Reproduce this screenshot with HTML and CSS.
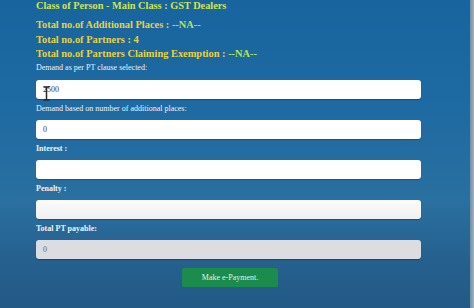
FILE: index.html
```html
<!DOCTYPE html>
<html lang="en">

<head>
    <meta charset="UTF-8">
    <meta name="viewport" content="width=device-width, initial-scale=1.0">
    <title>PT e-Payment</title>
    <link rel="stylesheet" href="styles.css">
</head>

<body>
    <div class="page">
        <div class="container">
            <h3 class="class-line">Class of Person - Main Class : GST Dealers</h3>
            <div class="totals">
                <p>Total no.of Additional Places : <span class="na">--NA--</span></p>
                <p>Total no.of Partners : 4</p>
                <p>Total no.of Partners Claiming Exemption : <span class="na">--NA--</span></p>
            </div>

            <form class="pay-form">
                <label class="field-label first">Demand as per PT clause selected:</label>
                <div class="input-wrap">
                    <input type="text" value="2500">
                    <span class="cursor">
                        <svg width="7" height="15" viewBox="0 0 7 15">
                            <path d="M0.5 1h6M3.5 1v13M0.5 14h6" stroke="#2a2a2a" stroke-width="1.5" fill="none"/>
                        </svg>
                    </span>
                </div>

                <label class="field-label">Demand based on number of additional places:</label>
                <input type="text" value="0">

                <label class="field-label bold">Interest :</label>
                <input type="text" value="">

                <label class="field-label bold">Penalty :</label>
                <input type="text" class="soft" value="">

                <label class="field-label bold">Total PT payable:</label>
                <input type="text" value="0" disabled>

                <div class="actions">
                    <button type="button">Make e-Payment.</button>
                </div>
            </form>
        </div>
        <div class="edge"></div>
    </div>
</body>

</html>
```

FILE: styles.css
```css
:root {
    --title-color: #cfe64a;
    --total-color: #e9d23a;
    --na-color: #b3e35a;
    --label-color: #eef3f8;
    --input-text: #3a3a3a;
    --button-color: #1b8c4c;
}

* {
    box-sizing: border-box;
    margin: 0;
    padding: 0;
}

body {
    font-family: "Liberation Serif", "Times New Roman", serif;
    width: 474px;
    height: 308px;
    overflow: hidden;
}

.page {
    display: flex;
    height: 308px;
    background: linear-gradient(180deg, #18649e 0%, #1e6aa2 35%, #2a70a0 65%, #25608e 85%, #235a86 100%);
}

.container {
    flex-grow: 1;
    padding-left: 36px;
}

.edge {
    width: 4px;
    background: linear-gradient(90deg, #6f8ea8, #a9b0b6);
}

.class-line {
    font-size: 10.3px;
    font-weight: bold;
    color: var(--title-color);
    line-height: 12px;
    margin-bottom: 6px;
}

.totals p {
    font-size: 10.4px;
    font-weight: bold;
    color: var(--total-color);
    line-height: 14.5px;
}

.totals .na {
    color: var(--na-color);
}

.pay-form {
    display: flex;
    flex-direction: column;
    width: 385px;
}

.field-label {
    font-size: 8px;
    color: var(--label-color);
    line-height: 12px;
    padding: 4px 0 5px;
}

.field-label.first {
    padding: 0 0 4px;
}

.field-label.bold {
    font-weight: bold;
}

.input-wrap {
    position: relative;
}

input {
    width: 385px;
    height: 19px;
    border: none;
    border-radius: 3px;
    background-color: #fff;
    padding: 0 7px;
    font-family: "Liberation Serif", "Times New Roman", serif;
    font-size: 8px;
    color: var(--input-text);
    box-shadow: 0 1px 1px rgba(0, 0, 0, 0.25);
}

input.soft {
    background: linear-gradient(180deg, #fbfbfb, #f0f0f0);
}

input:disabled {
    background-color: #dcdde0;
    color: #666;
}

.cursor {
    position: absolute;
    left: 7px;
    top: 8px;
    line-height: 0;
}

.actions {
    display: flex;
    justify-content: center;
    padding-top: 9px;
}

button {
    width: 96px;
    height: 19px;
    border: none;
    border-radius: 2px;
    background-color: var(--button-color);
    color: #e6f0e8;
    font-family: "Liberation Serif", "Times New Roman", serif;
    font-size: 8px;
    margin-left: 3px;
}
```
